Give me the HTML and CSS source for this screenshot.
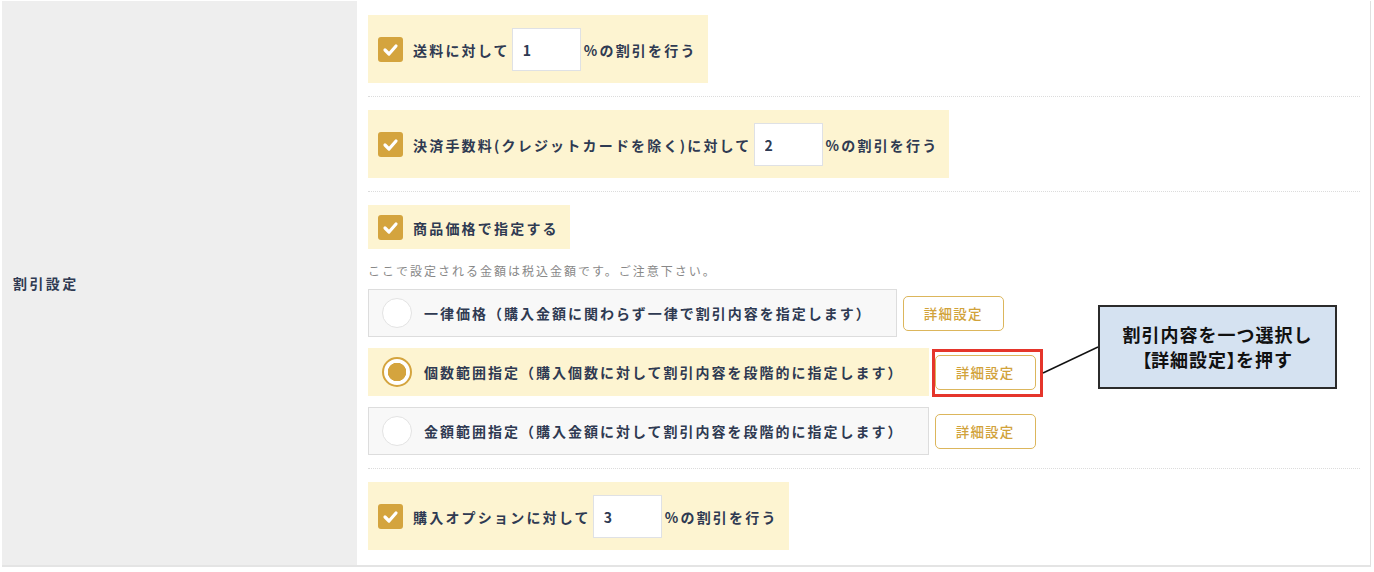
FILE: index.html
```html
<!DOCTYPE html>
<html lang="ja">
<head>
    <meta charset="UTF-8">
    <meta name="viewport" content="width=device-width, initial-scale=1.0">
    <title>割引設定</title>
    <link rel="stylesheet" href="styles.css">
</head>
<body>
    <div class="page">
        <div class="setting">
            <div class="setting-label">割引設定</div>
            <div class="setting-body">
                <div class="item">
                    <label class="check-row">
                        <span class="checkbox"><svg width="25" height="25" viewBox="0 0 25 25"><polyline points="7,13 11,17 18,9" fill="none" stroke="#fff" stroke-width="3.2" stroke-linecap="round" stroke-linejoin="round"/></svg></span>
                        <span class="check-text">送料に対して</span>
                        <input class="rate" type="text" value="1">
                        <span class="check-text">%の割引を行う</span>
                    </label>
                </div>
                <div class="item">
                    <label class="check-row">
                        <span class="checkbox"><svg width="25" height="25" viewBox="0 0 25 25"><polyline points="7,13 11,17 18,9" fill="none" stroke="#fff" stroke-width="3.2" stroke-linecap="round" stroke-linejoin="round"/></svg></span>
                        <span class="check-text">決済手数料(クレジットカードを除く)に対して</span>
                        <input class="rate" type="text" value="2">
                        <span class="check-text">%の割引を行う</span>
                    </label>
                </div>
                <div class="item">
                    <label class="check-row compact">
                        <span class="checkbox"><svg width="25" height="25" viewBox="0 0 25 25"><polyline points="7,13 11,17 18,9" fill="none" stroke="#fff" stroke-width="3.2" stroke-linecap="round" stroke-linejoin="round"/></svg></span>
                        <span class="check-text">商品価格で指定する</span>
                    </label>
                    <p class="note">ここで設定される金額は税込金額です。ご注意下さい。</p>
                    <div class="plan-list">
                        <div class="plan">
                            <label class="plan-option">
                                <span class="radio"></span>
                                <span class="plan-text">一律価格（購入金額に関わらず一律で割引内容を指定します）</span>
                            </label>
                            <button class="detail-btn">詳細設定</button>
                        </div>
                        <div class="plan">
                            <label class="plan-option selected">
                                <span class="radio"></span>
                                <span class="plan-text">個数範囲指定（購入個数に対して割引内容を段階的に指定します）</span>
                            </label>
                            <button class="detail-btn">詳細設定</button>
                        </div>
                        <div class="plan">
                            <label class="plan-option">
                                <span class="radio"></span>
                                <span class="plan-text">金額範囲指定（購入金額に対して割引内容を段階的に指定します）</span>
                            </label>
                            <button class="detail-btn">詳細設定</button>
                        </div>
                    </div>
                </div>
                <div class="item last">
                    <label class="check-row">
                        <span class="checkbox"><svg width="25" height="25" viewBox="0 0 25 25"><polyline points="7,13 11,17 18,9" fill="none" stroke="#fff" stroke-width="3.2" stroke-linecap="round" stroke-linejoin="round"/></svg></span>
                        <span class="check-text">購入オプションに対して</span>
                        <input class="rate" type="text" value="3">
                        <span class="check-text">%の割引を行う</span>
                    </label>
                </div>
            </div>
        </div>

        <!-- annotation -->
        <div class="mark"></div>
        <svg class="mark-line" width="60" height="32" viewBox="0 0 60 32"><line x1="3" y1="28" x2="58" y2="2" stroke="#111" stroke-width="1.4"/></svg>
        <div class="callout">
            <p class="callout-text">割引内容を一つ選択し<br><span class="bracket">【</span>詳細設定<span class="bracket">】</span>を押す</p>
        </div>
    </div>
</body>
</html>
```

FILE: styles.css
```css
:root {
    --gold: #d4a43e;
    --yellow-bg: #fdf4d1;
    --text-navy: #2f3a52;
    --line: #dddddd;
}
* {
    box-sizing: border-box;
}
body {
    margin: 0;
    font-family: "Noto Sans CJK JP", "Noto Sans", sans-serif;
    color: var(--text-navy);
    background: #fff;
}
.page {
    position: relative;
    width: 1369px;
    margin: 1px 0 0 2px;
    border-right: 1px solid #e0e0e0;
    border-bottom: 2px solid #e4e4e4;
}
.setting {
    display: flex;
    height: 564px;
}
.setting-label {
    width: 355px;
    flex-shrink: 0;
    display: flex;
    align-items: center;
    padding-left: 11px;
    background: #eeeeee;
    font-size: 14px;
    font-weight: bold;
    letter-spacing: 2.4px;
}
.setting-body {
    flex: 1;
    padding: 1px 10px 0 11px;
}
.item {
    padding: 13px 0;
    border-bottom: 1px dotted #dcdcdc;
}
.item.last {
    border-bottom: none;
}
.check-row {
    display: inline-flex;
    align-items: center;
    padding: 13px 11px 12px 10px;
    background: var(--yellow-bg);
    font-size: 14px;
    font-weight: bold;
    line-height: 20px;
    letter-spacing: 2.2px;
}
.check-row.compact {
    padding: 10px 11px 9px 10px;
}
.checkbox {
    width: 25px;
    height: 25px;
    margin-right: 10px;
    border-radius: 3px;
    background: var(--gold);
    display: flex;
}
.rate {
    width: 69px;
    height: 43px;
    margin: 0 3px 0 2px;
    padding: 0 10px;
    border: 1px solid #dfe1e5;
    font-family: inherit;
    font-size: 14px;
    font-weight: bold;
    color: var(--text-navy);
    background: #fff;
}
.note {
    margin: 13px 0 0;
    font-size: 12px;
    line-height: 18px;
    letter-spacing: 2px;
    color: #888;
}
.plan-list {
    margin-top: 9px;
    display: flex;
    flex-direction: column;
    gap: 11px;
}
.plan {
    display: flex;
    align-items: center;
}
.plan-option {
    display: flex;
    align-items: center;
    height: 48px;
    padding: 0 24px 0 13px;
    background: #f8f8f8;
    border: 1px solid var(--line);
    font-size: 14px;
    font-weight: bold;
    letter-spacing: 2px;
}
.plan-option.selected {
    background: var(--yellow-bg);
    border-color: var(--yellow-bg);
}
.radio {
    width: 30px;
    height: 30px;
    margin-right: 12px;
    border-radius: 50%;
    background: #fff;
    border: 1px solid #e3e3e3;
    flex-shrink: 0;
}
.selected .radio {
    border: 2px solid var(--gold);
    background: radial-gradient(circle, var(--gold) 0 9px, #fff 9.5px);
}
.detail-btn {
    width: 101px;
    height: 35px;
    margin-left: 6px;
    border: 1px solid #dcb65c;
    border-radius: 5px;
    background: #fff;
    font-family: inherit;
    font-size: 13.5px;
    font-weight: 500;
    letter-spacing: 1.2px;
    color: #d1a23a;
}
.mark {
    position: absolute;
    left: 930px;
    top: 348px;
    width: 111px;
    height: 48px;
    border: 3px solid #e5352b;
}
.mark-line {
    position: absolute;
    left: 1038px;
    top: 344px;
}
.callout {
    position: absolute;
    left: 1096px;
    top: 304px;
    width: 239px;
    height: 84px;
    display: flex;
    align-items: center;
    justify-content: center;
    background: #d5e2f1;
    border: 2px solid #2b2b2b;
    color: #111;
}
.callout-text {
    margin: 0;
    text-align: center;
    font-size: 18px;
    font-weight: bold;
    line-height: 25px;
    letter-spacing: 1px;
}
.bracket {
    font-feature-settings: "palt";
    letter-spacing: 0;
}
```
